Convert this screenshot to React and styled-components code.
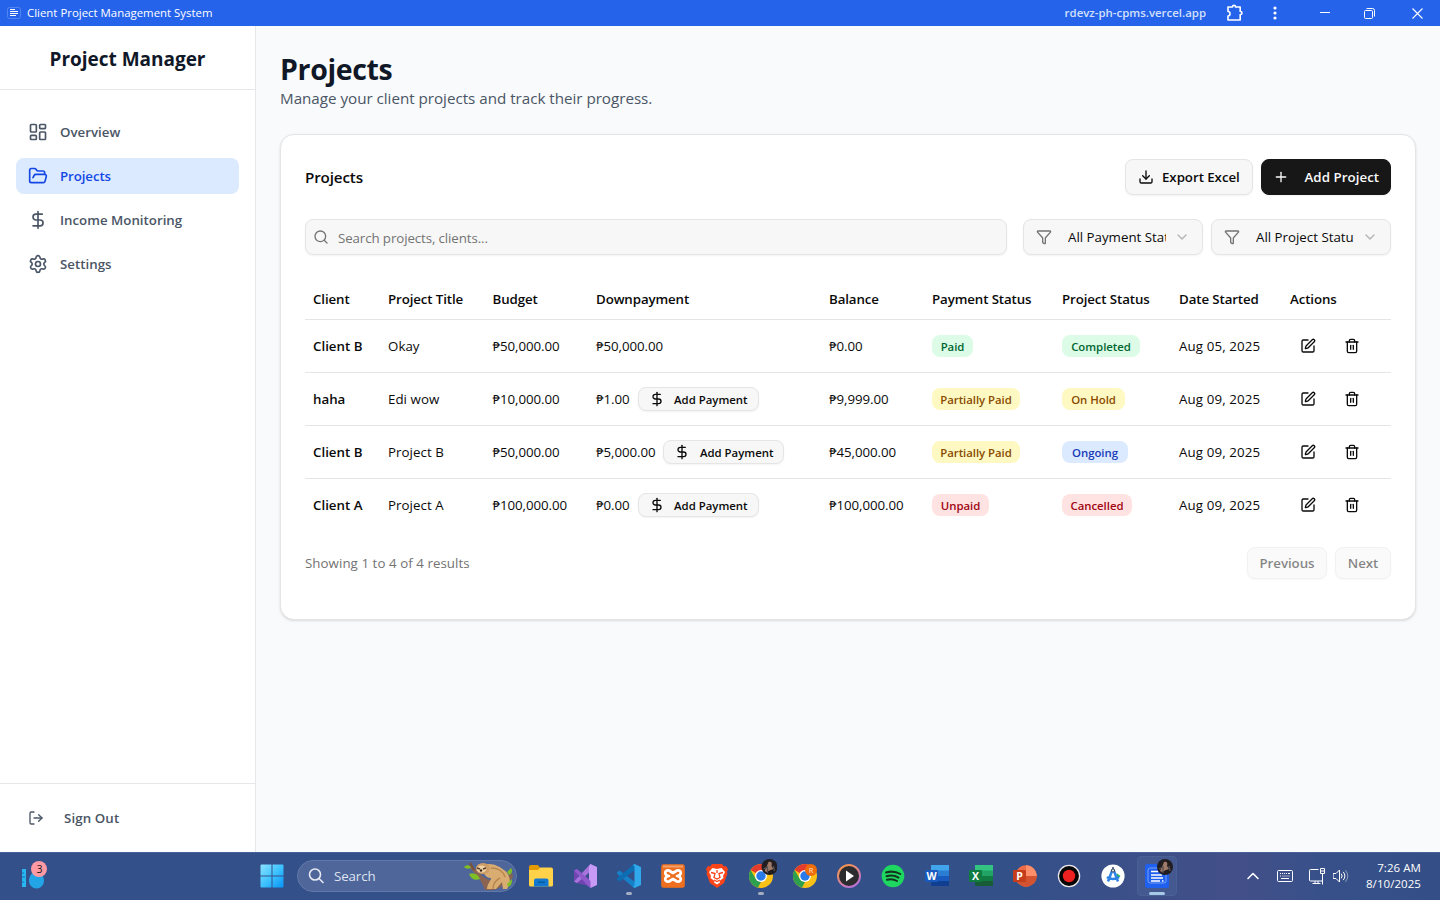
import React from "react";
import styled, { createGlobalStyle, css } from "styled-components";
import {
  LayoutDashboard,
  FolderOpen,
  DollarSign,
  Settings,
  LogOut,
  Download,
  Plus,
  Search,
  Funnel,
  ChevronDown,
  ChevronUp,
  SquarePen,
  Trash2,
} from "lucide-react";

const GlobalStyle = createGlobalStyle`
  *, *::before, *::after { box-sizing: border-box; }
  html, body { margin: 0; height: 100%; overflow: hidden; }
  body {
    font-family: "Open Sans", "Noto Sans", sans-serif;
    font-size: 13.3px;
    color: #0a0a0a;
    background: #f9fafb;
  }
  button, input { font: inherit; color: inherit; letter-spacing: inherit; }
  svg { display: block; flex: none; }
`;

const Screen = styled.div`
  display: flex;
  flex-direction: column;
  width: 1440px;
  height: 900px;
`;

/* Title bar */
const TitleBar = styled.header`
  display: flex;
  align-items: center;
  flex: none;
  height: 26px;
  padding-left: 7px;
  background: #2563eb;
  color: #fff;
  font-size: 11.4px;
`;
const AppName = styled.span`
  flex: 1;
  padding: 0 0 2px 6px;
  letter-spacing: 0.01px;
`;
const Address = styled.span`
  font-weight: 600;
  color: #d3e0fb;
  letter-spacing: 0.02px;
  padding-bottom: 2px;
  margin-right: 19px;
`;
const BarIcon = styled.span`
  display: flex;
  justify-content: center;
  width: ${(p) => p.$w}px;
`;

/* Shell */
const Body = styled.div`
  display: flex;
  flex: 1;
  min-height: 0;
`;
const Sidebar = styled.aside`
  display: flex;
  flex-direction: column;
  width: 256px;
  background: #fff;
  border-right: 1px solid #e5e7eb;
`;
const Brand = styled.div`
  display: flex;
  align-items: center;
  justify-content: center;
  height: 64px;
  padding-top: 2px;
  border-bottom: 1px solid #e5e7eb;
  font-size: 19px;
  font-weight: 700;
  color: #101828;
  letter-spacing: -0.02px;
`;
const Nav = styled.nav`
  display: flex;
  flex-direction: column;
  gap: 8px;
  flex: 1;
  padding: 24px 16px;
`;
const NavItem = styled.a`
  display: flex;
  align-items: center;
  gap: ${(p) => p.$gap || 12}px;
  height: 36px;
  padding: 0 12px;
  border-radius: 8px;
  font-weight: 600;
  color: #4a5565;
  ${(p) =>
    p.$active &&
    css`
      background: #dbeafe;
      color: #1447e6;
      letter-spacing: -0.1px;
    `}
`;
const SidebarFooter = styled.div`
  border-top: 1px solid #e5e7eb;
  padding: 16px;
  letter-spacing: 0.1px;
`;

const Main = styled.main`
  flex: 1;
  padding: 24px;
  background: #f9fafb;
`;
const PageTitle = styled.h1`
  margin: 0;
  font-size: 28.5px;
  line-height: 36px;
  padding-top: 1px;
  height: 36px;
  font-weight: 700;
  letter-spacing: -0.35px;
  color: #101828;
`;
const Subtitle = styled.p`
  margin: 0 0 24px;
  font-size: 15.2px;
  line-height: 24px;
  letter-spacing: -0.02px;
  color: #4a5565;
`;

/* Card */
const Card = styled.section`
  height: 486px;
  padding: 24px;
  background: #fff;
  border: 1px solid #e5e5e5;
  border-radius: 14px;
  box-shadow: 0 1px 3px rgba(0, 0, 0, 0.1), 0 1px 2px -1px rgba(0, 0, 0, 0.1);
`;
const CardHeader = styled.div`
  display: flex;
  align-items: center;
  gap: 8px;
  margin-bottom: 24px;
`;
const CardTitle = styled.h2`
  flex: 1;
  margin: 0;
  font-size: 15.2px;
  font-weight: 600;
  letter-spacing: -0.15px;
`;
const Button = styled.button`
  display: flex;
  align-items: center;
  gap: ${(p) => p.$gap || 8}px;
  width: ${(p) => p.$w}px;
  height: ${(p) => p.$h || 36}px;
  padding: 0 ${(p) => p.$pad || 12}px;
  border: 1px solid #e5e5e5;
  border-radius: 8px;
  background: #f7f7f7;
  font-weight: 600;
  letter-spacing: -0.05px;
  white-space: nowrap;
  box-shadow: 0 1px 2px rgba(0, 0, 0, 0.05);
  ${(p) =>
    p.$dark &&
    css`
      background: #171717;
      border-color: #171717;
      color: #fafafa;
      letter-spacing: 0.05px;
    `}
  ${(p) =>
    p.$small &&
    css`
      font-size: 11.4px;
      letter-spacing: 0;
    `}
  &:disabled {
    opacity: 0.5;
    justify-content: center;
  }
`;
const Filters = styled.div`
  display: flex;
  gap: 8px;
  margin-bottom: 24px;
`;
const SearchBox = styled.label`
  display: flex;
  align-items: center;
  gap: 9px;
  flex: 1;
  height: 36px;
  margin-right: 8px;
  padding: 0 7px;
  border: 1px solid #e5e5e5;
  border-radius: 8px;
  background: #f7f7f7;
  color: #737373;
  letter-spacing: -0.1px;
  box-shadow: 0 1px 2px rgba(0, 0, 0, 0.05);
`;
const SearchInput = styled.input`
  flex: 1;
  padding: 2px 0 0;
  border: 0;
  outline: 0;
  background: none;
  &::placeholder {
    color: #737373;
    opacity: 1;
  }
`;
const Select = styled.div`
  display: flex;
  align-items: center;
  width: 180px;
  height: 36px;
  padding: 0 12px;
  border: 1px solid #e5e5e5;
  border-radius: 8px;
  background: #f7f7f7;
  color: #737373;
  box-shadow: 0 1px 2px rgba(0, 0, 0, 0.05);
`;
const SelectValue = styled.span`
  width: 98px;
  margin: 0 8px 0 16px;
  overflow: hidden;
  white-space: nowrap;
  color: #0a0a0a;
`;

/* Table */
const Table = styled.table`
  width: 1086px;
  table-layout: fixed;
  border-collapse: separate;
  border-spacing: 0;
`;
const Th = styled.th`
  height: 41px;
  padding: 0 8px;
  border-bottom: 1px solid #e5e5e5;
  text-align: left;
  font-weight: 600;
  letter-spacing: -0.11px;
  white-space: nowrap;
`;
const Td = styled.td`
  height: 53px;
  padding: 0 8px;
  border-bottom: 1px solid #e5e5e5;
  font-weight: ${(p) => (p.$strong ? 600 : 400)};
  letter-spacing: ${(p) => p.$track || 0}px;
  white-space: nowrap;
  tr:last-child > & {
    height: 52px;
    border-bottom: 0;
  }
`;
const Inline = styled.div`
  display: flex;
  align-items: center;
  gap: 8px;
`;
const tones = {
  green: ["#dcfce7", "#016630"],
  yellow: ["#fef9c2", "#894b00"],
  blue: ["#dbeafe", "#193cb8"],
  red: ["#ffe2e2", "#9f0712"],
};
const Badge = styled.span`
  display: flex;
  align-items: center;
  justify-content: center;
  width: ${(p) => p.$w}px;
  height: 22px;
  padding-top: 1px;
  border-radius: 8px;
  background: ${(p) => tones[p.$tone][0]};
  color: ${(p) => tones[p.$tone][1]};
  font-size: 11.4px;
  font-weight: 600;
  letter-spacing: -0.04px;
`;
const IconButton = styled.button`
  display: flex;
  align-items: center;
  justify-content: center;
  width: 36px;
  height: 32px;
  padding: 0;
  border: 0;
  background: none;
`;
const Pagination = styled.div`
  display: flex;
  align-items: center;
  gap: 8px;
  margin-top: 16px;
`;
const Summary = styled.span`
  flex: 1;
  color: #737373;
  letter-spacing: 0.06px;
`;

/* Taskbar */
const Taskbar = styled.footer`
  display: flex;
  align-items: center;
  flex: none;
  height: 48px;
  border-top: 1px solid #49629b;
  padding-bottom: 1px;
  background: linear-gradient(90deg, #33508a 0%, #335089 70%, #3f4f88 82%, #434f88 86%, #37508a 92%, #344f87 100%);
  color: #fff;
`;
const Widgets = styled.div`
  width: 250px;
  padding: 0 0 3px 20px;
`;
const Slot = styled.div`
  position: relative;
  display: flex;
  align-items: center;
  justify-content: center;
  width: 44px;
  height: 46px;
  &::after {
    content: "";
    display: ${(p) => (p.$running || p.$focused ? "block" : "none")};
    position: absolute;
    bottom: 4px;
    width: ${(p) => (p.$focused ? 16 : 6)}px;
    height: 3px;
    border-radius: 2px;
    background: ${(p) => (p.$focused ? "#a5c9e6" : "#a5adc3")};
  }
`;
const FocusTile = styled.div`
  display: flex;
  align-items: center;
  justify-content: center;
  width: 40px;
  height: 40px;
  border: 1px solid #4a6195;
  border-radius: 4px;
  background: #43598f;
`;
const TaskSearch = styled.div`
  display: flex;
  align-items: center;
  gap: 10px;
  width: 220px;
  height: 32px;
  margin: 0 2px 0 3px;
  padding-left: 10px;
  border: 1px solid #6278a8;
  border-radius: 16px;
  background: #4f669b;
  color: #dde3ef;
  overflow: hidden;
`;
const TaskSearchLabel = styled.span`
  flex: 1;
  letter-spacing: -0.1px;
`;
const Tray = styled.div`
  display: flex;
  align-items: center;
  flex: 1;
  padding: 0 19px 0 66px;
`;
const TrayItem = styled.span`
  display: flex;
  justify-content: center;
  width: ${(p) => p.$w}px;
`;
const Clock = styled.div`
  flex: 1;
  text-align: right;
  font-size: 11.5px;
  line-height: 16px;
  letter-spacing: 0.06px;
`;

/* Taskbar artwork */
const IconText = ({ x, y, size, fill = "#fff", children }) => (
  <text x={x} y={y} fontSize={size} fontWeight="700" fill={fill} textAnchor="middle">
    {children}
  </text>
);
const WidgetIcon = () => (
  <svg width="30" height="32" viewBox="0 0 30 32">
    <rect x="2" y="10" width="4" height="18" fill="#27b7ee" />
    <path d="M2 14h2M2 18h3M2 23h2" stroke="#1674b5" strokeWidth="1.2" />
    <path d="M16.500 12c5 1 7.500 5 7.500 10a7.500 7.500 0 0 1-15 0c0-5 3-9 7.500-10z" fill="#22a4e6" />
    <circle cx="19" cy="10" r="8" fill="#ff99a4" />
    <text x="19.500" y="14" fontSize="10.500" fill="#1b1b1b" textAnchor="middle">3</text>
  </svg>
);
const WindowsIcon = () => (
  <svg width="24" height="24" viewBox="0 0 24 24">
    <defs>
      <linearGradient id="win" x1="0" y1="0" x2="1" y2="1">
        <stop offset="0" stopColor="#8be3ff" />
        <stop offset=".5" stopColor="#3fc3ff" />
        <stop offset="1" stopColor="#0794f7" />
      </linearGradient>
    </defs>
    <path d="M.5 1.500a1 1 0 0 1 1-1H11.500v11H.5zM12.500.5H22.500a1 1 0 0 1 1 1v10h-11zM.5 12.500h11v11h-10a1 1 0 0 1-1-1zM12.500 12.500h11v10a1 1 0 0 1-1 1h-10z" fill="url(#win)" />
  </svg>
);
const SlothIcon = () => (
  <svg width="52" height="30" viewBox="0 0 52 30">
    <path d="M5 4c8 4 10 10 18 14 7 3 17 1 25-6l1 4c-7 9-14 11-20 13h-8c-3-9-9-16-16-23z" fill="#8a6450" />
    <path d="M6 2l4 7" stroke="#76523f" strokeWidth="2.500" />
    <path d="M20 4c7-3 15 1 20 5 5 3 6 9 6 13l-3 6h-4l-1-7-6 7h-9c0-5 4-8 4-11-6 0-9-6-7-13z" fill="#d9ad72" />
    <path d="M27 7c7 0 12 3 14 9M36 17c-4 2-7 6-7 11" stroke="#b8864f" strokeWidth="1.500" fill="none" />
    <ellipse cx="19" cy="7.500" rx="7" ry="5.500" fill="#cf9e67" />
    <ellipse cx="17.500" cy="8" rx="4.800" ry="3.500" fill="#f0d3a3" />
    <path d="M13 7l3 1M19 8l3-1" stroke="#5d3d2b" strokeWidth="1.600" />
    <circle cx="17" cy="9.500" r="1.200" fill="#352019" />
    <path d="M0 6c3-3 6-2 7 1-3 1-5 1-7-1zM5 13c5-2 9 0 11 5-5 2-9 0-11-5zM43 11l4-4c2 3 1 6-2 7zM43 23l5-5c0 5-1 7-4 8z" fill="#7fbf25" />
  </svg>
);
const ExplorerIcon = () => (
  <svg width="24" height="24" viewBox="0 0 24 24">
    <path d="M0 3a2 2 0 0 1 2-2h7l2 3v4H0z" fill="#e29a00" />
    <path d="M0 6h9l2-2.500h11a2 2 0 0 1 2 2V21a1.500 1.500 0 0 1-1.500 1.500h-21A1.500 1.500 0 0 1 0 21z" fill="#ffd24a" />
    <path d="M5 22.500v-6a2 2 0 0 1 2-2h10.500a2 2 0 0 1 2 2v6z" fill="#1278cf" />
    <path d="M9 18.300h7" stroke="#075a9c" strokeWidth="1.500" />
  </svg>
);
const VisualStudioIcon = () => (
  <svg width="24" height="24" viewBox="0 0 24 24">
    <path d="M1 6.500 4 5l13 11 1 7-2-1L4 19l-3-1.500z" fill="#7444b4" opacity=".95" />
    <path d="M5 9v6l3-3z" fill="#33508a" />
    <path d="M1 17.500 16.500 1 18 0v7L4 19z" fill="#a873dd" />
    <path d="M17.500 0 24 3v18l-6.500 3-1.500-2V2z" fill="#c79af5" />
    <path d="M1 6.500 4 5l13.500 12v7l-1.500-1z" fill="#8f5acb" />
  </svg>
);
const VSCodeIcon = () => (
  <svg width="24" height="24" viewBox="0 0 24 24">
    <path d="M0 8.300 2.500 6.500 18 18v6l-1.500-.5L0 9.800z" fill="#1680c9" />
    <path d="M0 15.700 2.500 17.500 18 6V0l-1.500.5L0 14.200z" fill="#0c6db3" />
    <path d="M17.500 0 24 3v18l-6.500 3-1.500-1.500 1.500-1V2.500L16 1z" fill="#2fa9ec" />
  </svg>
);
const XamppIcon = () => (
  <svg width="24" height="24" viewBox="0 0 24 24">
    <rect x=".5" y=".5" width="23" height="23" rx="2" fill="#ed6f1f" stroke="#c86a31" />
    <path d="M2 1.500h20v2H2z" fill="#f5a06a" />
    <path d="M8 6.500c-5-1-5 5 0 5.500-5 .5-5 6.500 0 5.500l4-2.500 4 2.500c5 1 5-5 0-5.500 5-.5 5-6.500 0-5.500L12 9z" fill="none" stroke="#fff" strokeWidth="2.700" strokeLinejoin="round" />
  </svg>
);
const BraveIcon = () => (
  <svg width="22" height="24" viewBox="0 0 22 24">
    <path d="M6 0h10l2 2.500 2-.5 2 3-1 3 .5 1.500L18 19l-7 5-7-5L.5 9.500 1 8 0 5l2-3 2 .5z" fill="#fb4318" />
    <path d="M6.500 4 11 5l4.500-1L19 8l-2 4 .5 2-4 3 .5 1.500-3 2-3-2L8.500 17l-4-3 .5-2-2-4z" fill="#fff" />
    <path d="M5 8.500l4 1-1 4 3 1.500 3-1.500-1-4 4-1M11 6v3M8 16l3 1.500 3-1.500" fill="none" stroke="#fb4318" strokeWidth="1.300" />
  </svg>
);
const Avatar = ({ cx, cy }) => (
  <g>
    <circle cx={cx} cy={cy} r="8" fill="#211d20" />
    <path d={`M${cx - 1} ${cy - 5}c3-1 4 1 3 4l2 3-3 1-4 2-2-1 2-4z`} fill="#a07a68" />
    <path d={`M${cx - 6} ${cy + 2}l4-2 0 6M${cx + 4} ${cy - 1}l1 5`} stroke="#575052" strokeWidth="1.300" fill="none" />
  </g>
);
const ChromeDisc = ({ y = 4 }) => (
  <g transform={`translate(2 ${y})`}>
    <circle cx="12" cy="12" r="12" fill="#fbc116" />
    <path d="M12 12 1.600 6A12 12 0 0 1 22.400 6H12z" fill="#e33b2e" />
    <path d="M1.600 6 6.800 15 12 18l0 0-3 5.600A12 12 0 0 1 1.600 6z" fill="#2da04e" />
    <circle cx="12" cy="12" r="6" fill="#fff" />
    <circle cx="12" cy="12" r="4.700" fill="#2a7bea" />
  </g>
);
const ChromeIcon = ({ letter }) => (
  <svg width="32" height="34" viewBox="-2 -1 32 34">
    <ChromeDisc />
    {letter ? (
      <g>
        <circle cx="20" cy="10" r="6" fill="#ef6c0b" />
        <text x="20" y="13" fontSize="7.500" fill="#ffe2c8" textAnchor="middle">{letter}</text>
      </g>
    ) : (
      <Avatar cx={22.500} cy={7} />
    )}
  </svg>
);
const MediaIcon = () => (
  <svg width="24" height="24" viewBox="0 0 24 24">
    <defs>
      <linearGradient id="ring" x1="0" y1="0" x2=".6" y2="1">
        <stop offset="0" stopColor="#ff9a3d" />
        <stop offset="1" stopColor="#b973d2" />
      </linearGradient>
    </defs>
    <circle cx="12" cy="12" r="11" fill="#2c2c2e" stroke="url(#ring)" strokeWidth="2" />
    <path d="M9 6.500v11l8-5.500z" fill="#fff" />
  </svg>
);
const SpotifyIcon = () => (
  <svg width="24" height="24" viewBox="0 0 24 24">
    <circle cx="12" cy="12" r="11.300" fill="#1ed760" />
    <path d="M5 8.500c5-1.500 10-1 14.300 1.500M5.500 12.300c4.500-1.300 8.500-.8 12 1.300M6 15.800c4-1 7-.6 10 1.200" fill="none" stroke="#14321f" strokeWidth="2" strokeLinecap="round" />
  </svg>
);
const OfficeIcon = ({ letter, shades, round }) => (
  <svg width="24" height="24" viewBox="0 0 24 24">
    {round ? (
      <g>
        <circle cx="13" cy="12" r="10.700" fill={shades[1]} />
        <path d="M13 1.300A10.700 10.700 0 0 1 23.700 12H13z" fill={shades[0]} />
        <path d="M2.300 12h21.400a10.700 10.700 0 0 1-21.400 0z" fill={shades[2]} />
      </g>
    ) : (
      <g>
        <path d="M6 1h18v6H6z" fill={shades[0]} />
        <path d="M6 6.500h18V12H6z" fill={shades[1]} />
        <path d="M6 12h18v5H6z" fill={shades[2]} />
        <path d="M6 17h18v5H7a1 1 0 0 1-1-1z" fill={shades[3]} />
      </g>
    )}
    <rect x="0" y="6" width="13" height="12" rx="1" fill={shades[4]} />
    <IconText x="6.500" y="16" size="10.500">{letter}</IconText>
  </svg>
);
const RecordIcon = () => (
  <svg width="24" height="24" viewBox="0 0 24 24">
    <circle cx="12" cy="12" r="10.600" fill="#050505" stroke="#e8e8ec" strokeWidth="1.300" />
    <circle cx="12" cy="12" r="6.200" fill="#ed211f" />
  </svg>
);
const StudioIcon = () => (
  <svg width="24" height="24" viewBox="0 0 24 24">
    <circle cx="12" cy="12" r="11.600" fill="#fff" />
    <path d="M15.500 9l4 3-3 3z" fill="#25b35c" />
    <path d="M11 7 7 17.500M13 7l4 10.500M6 13c3 2.500 9 2.500 12 0" fill="none" stroke="#2f83e6" strokeWidth="2.500" />
    <circle cx="12" cy="6.500" r="1.500" fill="#fff" stroke="#364a63" strokeWidth="1.200" />
    <path d="M12 3v2" stroke="#364a63" strokeWidth="1.500" />
  </svg>
);
const ProjectAppIcon = () => (
  <svg width="32" height="34" viewBox="-2 -1 32 34">
    <rect x="2" y="4" width="24" height="24" rx="2.500" fill="#1f60ee" />
    <rect x="5" y="8" width="18" height="15" rx="2" fill="none" stroke="#79a0f7" />
    <path d="M8 11.500h7M8 15h11M8 18h12M8 21h9M19 21h1.500" stroke="#fff" strokeWidth="1.700" />
    <Avatar cx={22} cy={7} />
  </svg>
);

const taskbarApps = [
  { icon: <ExplorerIcon /> },
  { icon: <VisualStudioIcon /> },
  { icon: <VSCodeIcon />, running: true },
  { icon: <XamppIcon /> },
  { icon: <BraveIcon /> },
  { icon: <ChromeIcon />, running: true },
  { icon: <ChromeIcon letter="R" /> },
  { icon: <MediaIcon /> },
  { icon: <SpotifyIcon /> },
  { icon: <OfficeIcon letter="W" shades={["#41a5ee", "#2b7cd3", "#185abd", "#103f91", "#185abd"]} /> },
  { icon: <OfficeIcon letter="X" shades={["#33c481", "#21a366", "#107c41", "#185c37", "#107c41"]} /> },
  { icon: <OfficeIcon round letter="P" shades={["#ff8f6b", "#ed6c47", "#d35230", "", "#c43e1c"]} /> },
  { icon: <RecordIcon /> },
  { icon: <StudioIcon /> },
];

const navItems = [
  { label: "Overview", Icon: LayoutDashboard },
  { label: "Projects", Icon: FolderOpen, active: true },
  { label: "Income Monitoring", Icon: DollarSign },
  { label: "Settings", Icon: Settings },
];

const columns = [
  ["Client", 75],
  ["Project Title", 104.5],
  ["Budget", 103.5],
  ["Downpayment", 233],
  ["Balance", 103],
  ["Payment Status", 130],
  ["Project Status", 117],
  ["Date Started", 111],
  ["Actions", 109],
];

const projects = [
  { client: "Client B", title: "Okay", budget: "₱50,000.00", down: "₱50,000.00", balance: "₱0.00", pay: ["Paid", "green", 41], status: ["Completed", "green", 78], date: "Aug 05, 2025" },
  { client: "haha", title: "Edi wow", budget: "₱10,000.00", down: "₱1.00", due: true, balance: "₱9,999.00", pay: ["Partially Paid", "yellow", 88], status: ["On Hold", "yellow", 63], date: "Aug 09, 2025" },
  { client: "Client B", title: "Project B", budget: "₱50,000.00", down: "₱5,000.00", due: true, balance: "₱45,000.00", pay: ["Partially Paid", "yellow", 88], status: ["Ongoing", "blue", 66], date: "Aug 09, 2025" },
  { client: "Client A", title: "Project A", budget: "₱100,000.00", down: "₱0.00", due: true, balance: "₱100,000.00", pay: ["Unpaid", "red", 57], status: ["Cancelled", "red", 70], date: "Aug 09, 2025" },
];

function WindowTitleBar() {
  return (
    <TitleBar>
      <svg width="14" height="14" viewBox="0 0 14 14">
        <rect x=".5" y="1.500" width="13" height="11" rx="2" fill="none" stroke="#5484f0" />
        <path d="M3 3.500h5M3 5.500h8M3 7.500h8M3 9.500h6" stroke="#fff" />
      </svg>
      <AppName>Client Project Management System</AppName>
      <Address>rdevz-ph-cpms.vercel.app</Address>
      <BarIcon $w={20}>
        <svg width="18" height="18" viewBox="0 0 18 18" fill="none" stroke="#fff" strokeWidth="1.600">
          <path d="M2 3h4.500V2.600c0-1.700 3-1.700 3 0V3h4.700v4.500h.5c1.700 0 1.700 3 0 3h-.5V16H2v-4c2.700 0 2.700-4.500 0-4.500z" strokeLinejoin="round" />
        </svg>
      </BarIcon>
      <BarIcon $w={59}>
        <svg width="4" height="14" viewBox="0 0 4 14" fill="#fff">
          <circle cx="2" cy="2" r="1.600" />
          <circle cx="2" cy="7" r="1.600" />
          <circle cx="2" cy="12" r="1.600" />
        </svg>
      </BarIcon>
      <BarIcon $w={41}>
        <svg width="10" height="10" viewBox="0 0 10 10" stroke="#fff">
          <path d="M0 4.500h10" />
        </svg>
      </BarIcon>
      <BarIcon $w={49}>
        <svg width="11" height="11" viewBox="0 0 11 11" fill="none" stroke="#fff">
          <rect x=".5" y="2.500" width="8" height="8" rx="1" />
          <path d="M2.500.5h6a2 2 0 0 1 2 2v6" />
        </svg>
      </BarIcon>
      <BarIcon $w={46}>
        <svg width="11" height="11" viewBox="0 0 11 11" stroke="#fff" strokeWidth="1.100">
          <path d="M.5.5l10 10M10.500.5l-10 10" />
        </svg>
      </BarIcon>
    </TitleBar>
  );
}

function ProjectRow({ p }) {
  return (
    <tr>
      <Td $strong>{p.client}</Td>
      <Td $track={0.05}>{p.title}</Td>
      <Td $track={-0.08}>{p.budget}</Td>
      <Td $track={-0.08}>
        <Inline>
          {p.down}
          {p.due && (
            <Button $small $w={121} $h={24} $pad={10} $gap={9.500}>
              <DollarSign size={16} />
              Add Payment
            </Button>
          )}
        </Inline>
      </Td>
      <Td $track={-0.08}>{p.balance}</Td>
      <Td>
        <Badge $tone={p.pay[1]} $w={p.pay[2]}>{p.pay[0]}</Badge>
      </Td>
      <Td>
        <Badge $tone={p.status[1]} $w={p.status[2]}>{p.status[0]}</Badge>
      </Td>
      <Td $track={0.12}>{p.date}</Td>
      <Td>
        <Inline>
          <IconButton aria-label="Edit"><SquarePen size={16} /></IconButton>
          <IconButton aria-label="Delete"><Trash2 size={16} /></IconButton>
        </Inline>
      </Td>
    </tr>
  );
}

function ProjectsCard() {
  return (
    <Card>
      <CardHeader>
        <CardTitle>Projects</CardTitle>
        <Button $w={128}>
          <Download size={16} />
          Export Excel
        </Button>
        <Button $dark $w={130} $gap={15.500} $pad={11}>
          <Plus size={16} />
          Add Project
        </Button>
      </CardHeader>
      <Filters>
        <SearchBox>
          <Search size={16} />
          <SearchInput placeholder="Search projects, clients..." />
        </SearchBox>
        {["All Payment Status", "All Project Status"].map((label) => (
          <Select key={label}>
            <Funnel size={16} />
            <SelectValue>{label}</SelectValue>
            <ChevronDown size={16} opacity={0.5} />
          </Select>
        ))}
      </Filters>
      <Table>
        <colgroup>
          {columns.map(([name, width]) => (
            <col key={name} width={width} />
          ))}
        </colgroup>
        <thead>
          <tr>
            {columns.map(([name]) => (
              <Th key={name}>{name}</Th>
            ))}
          </tr>
        </thead>
        <tbody>
          {projects.map((p, i) => (
            <ProjectRow key={i} p={p} />
          ))}
        </tbody>
      </Table>
      <Pagination>
        <Summary>Showing 1 to 4 of 4 results</Summary>
        <Button disabled $w={80} $h={32}>Previous</Button>
        <Button disabled $w={56} $h={32}>Next</Button>
      </Pagination>
    </Card>
  );
}

function DesktopTaskbar() {
  return (
    <Taskbar>
      <Widgets>
        <WidgetIcon />
      </Widgets>
      <Slot>
        <WindowsIcon />
      </Slot>
      <TaskSearch>
        <svg width="16" height="16" viewBox="0 0 16 16" fill="none" stroke="#e6eaf3" strokeWidth="1.600" strokeLinecap="round">
          <circle cx="7" cy="6.500" r="5.500" />
          <path d="M11 10.500l4 4" />
        </svg>
        <TaskSearchLabel>Search</TaskSearchLabel>
        <SlothIcon />
      </TaskSearch>
      {taskbarApps.map(({ icon, running }, i) => (
        <Slot key={i} $running={running}>{icon}</Slot>
      ))}
      <Slot $focused>
        <FocusTile>
          <ProjectAppIcon />
        </FocusTile>
      </Slot>
      <Tray>
        <TrayItem $w={16}><ChevronUp size={20} strokeWidth={1.900} /></TrayItem>
        <TrayItem $w={48}>
          <svg width="16" height="12" viewBox="0 0 16 12" fill="none" stroke="#fff">
            <rect x=".5" y=".5" width="15" height="11" rx="1" />
            <path d="M3 3.500h1m1 0h1m1 0h1m1 0h1m1 0h2M3 6h1m1.500 0h1m1 0h1m1 0h1m1 0h1M4 8.500h8" />
          </svg>
        </TrayItem>
        <TrayItem $w={16}>
          <svg width="17" height="17" viewBox="0 0 17 17" fill="none" stroke="#fff">
            <path d="M9.500 1.500h-8a1 1 0 0 0-1 1v9.500a1 1 0 0 0 1 1h12V8M3.500 15.500h8M6 13v2.500M9 13v2.500" />
            <path d="M11.500.5h4v5h-4zM13.500 5.500v11M11.500 3h4" />
          </svg>
        </TrayItem>
        <TrayItem $w={31}>
          <svg width="16" height="14" viewBox="0 0 16 14" fill="none" stroke="#fff" strokeLinejoin="round" strokeLinecap="round">
            <path d="M.5 4.500H3L6.500 1v12L3 9.500H.5z" />
            <path d="M8.500 5q1.500 2 0 4M10.500 3.200q3 3.800 0 7.600" />
            <path d="M12.700 1.500q4.500 5.500 0 11" opacity=".45" />
          </svg>
        </TrayItem>
        <Clock>
          <div>7:26 AM</div>
          <div>8/10/2025</div>
        </Clock>
      </Tray>
    </Taskbar>
  );
}

export default function App() {
  return (
    <Screen>
      <GlobalStyle />
      <WindowTitleBar />
      <Body>
        <Sidebar>
          <Brand>Project Manager</Brand>
          <Nav>
            {navItems.map(({ label, Icon, active }) => (
              <NavItem key={label} $active={active}>
                <Icon size={20} strokeWidth={2} />
                {label}
              </NavItem>
            ))}
          </Nav>
          <SidebarFooter>
            <NavItem $gap={20}>
              <LogOut size={16} />
              Sign Out
            </NavItem>
          </SidebarFooter>
        </Sidebar>
        <Main>
          <PageTitle>Projects</PageTitle>
          <Subtitle>Manage your client projects and track their progress.</Subtitle>
          <ProjectsCard />
        </Main>
      </Body>
      <DesktopTaskbar />
    </Screen>
  );
}
